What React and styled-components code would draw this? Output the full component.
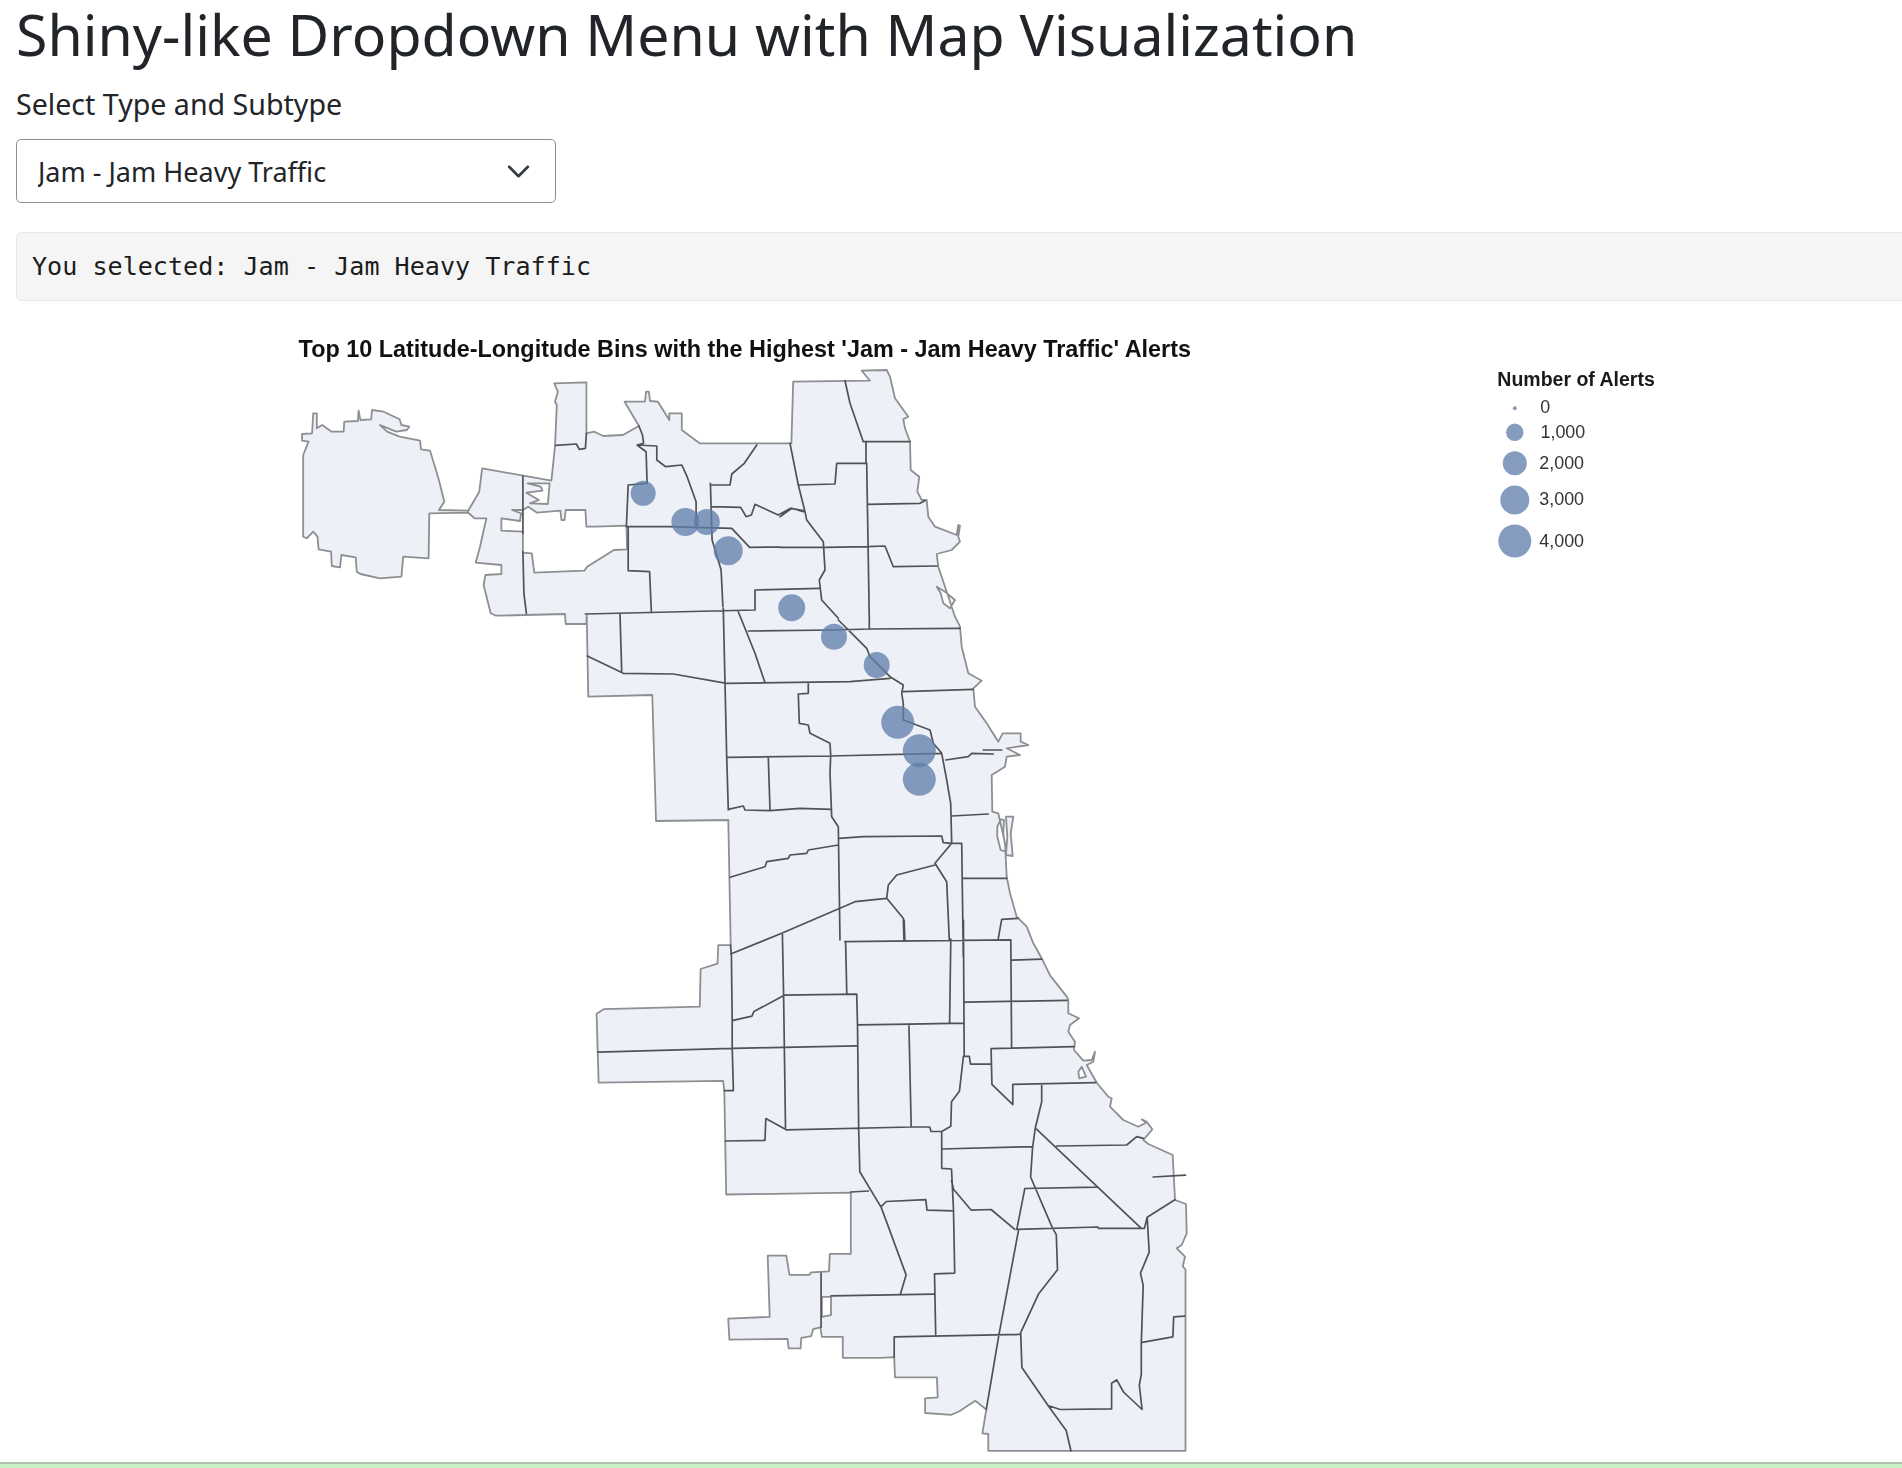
import React from "react";
import styled, { createGlobalStyle } from "styled-components";

const GlobalStyle = createGlobalStyle`
  html, body {
    margin: 0;
    padding: 0;
    background: #fff;
  }
`;

const Page = styled.div`
  width: 1902px;
  height: 1468px;
  overflow: hidden;
  display: flex;
  flex-direction: column;
  font-family: "Noto Sans", "Open Sans", sans-serif;
  color: #212529;
`;

const Content = styled.div`
  flex: 1;
  padding-left: 16px;
  min-height: 0;
`;

const Title = styled.h1`
  margin: 0;
  height: 68px;
  font-size: 57.2px;
  line-height: 68px;
  font-weight: 400;
  white-space: nowrap;
`;

const FieldLabel = styled.label`
  display: block;
  margin-top: 16px;
  height: 40px;
  font-size: 28.6px;
  line-height: 40px;
`;

const SelectWrap = styled.div`
  position: relative;
  width: 540px;
  height: 64px;
  margin-top: 15px;
`;

const Select = styled.select`
  appearance: none;
  display: block;
  width: 100%;
  height: 100%;
  padding: 0 60px 0 21px;
  border: 1px solid #868e96;
  border-radius: 5px;
  background: #fff;
  color: #212529;
  font: 400 27px "Noto Sans", "Open Sans", sans-serif;
`;

const Chevron = styled.svg`
  position: absolute;
  right: 25px;
  top: 20px;
  width: 25px;
  height: 25px;
  fill: none;
  stroke: #343a40;
  stroke-width: 1.7;
  stroke-linecap: round;
  stroke-linejoin: round;
  pointer-events: none;
`;

const Output = styled.pre`
  box-sizing: border-box;
  width: calc(100% + 10px);
  height: 69px;
  margin: 29px 0 0;
  padding: 0 15px;
  border: 1px solid #e6e6e6;
  border-radius: 5px;
  background: #f5f5f5;
  color: #1c1c1c;
  font-family: "DejaVu Sans Mono", monospace;
  font-size: 25.1px;
  line-height: 67px;
`;

const Chart = styled.svg`
  display: block;
  width: 1902px;
  height: 1146px;
  margin: 16px 0 0 -16px;
  filter: blur(0.7px);
`;

const Districts = styled.path`
  fill: #edf0f6;
  fill-rule: evenodd;
  stroke: #8d8f92;
  stroke-width: 1.8;
  stroke-linejoin: round;
`;

const Borders = styled.path`
  fill: none;
  stroke: #505256;
  stroke-width: 1.7;
  stroke-linejoin: round;
  stroke-linecap: round;
`;

const Bin = styled.circle`
  fill: #5f7dab;
  fill-opacity: 0.76;
`;

const ChartTitle = styled.text`
  font: 700 23.4px "Liberation Sans", Arial, sans-serif;
  fill: #111;
`;

const LegendTitle = styled.text`
  font: 700 19.5px "Liberation Sans", Arial, sans-serif;
  fill: #1a1a1a;
`;

const LegendLabel = styled.text`
  font: 400 17.9px "Liberation Sans", Arial, sans-serif;
  fill: #333;
`;

const BottomBand = styled.div`
  flex: none;
  height: 6px;
  box-sizing: border-box;
  border-top: 2px solid #b1bfae;
  background: #c9f1c8;
`;

// the traces were read off crops of differing scale: [left, top, scaleX, scaleY]
const ZONES = {
  a: [280, 320, 2.8, 3],
  b: [580, 560, 3, 3],
  c: [580, 920, 2.53, 2.86],
  d: [780, 360, 3, 3],
  e: [1000, 1000, 3, 3],
};

const line = (zone, text) => {
  const [left, top, sx, sy] = ZONES[zone];
  return text
    .trim()
    .split(/\s+/)
    .map((pair) => {
      const [x, y] = pair.split(",").map(Number);
      return `${(left + x / sx).toFixed(1)} ${(top + y / sy).toFixed(1)}`;
    });
};

const toPath = (...runs) => "M" + runs.flat().join(" L") + " Z";
const toLines = (lines) =>
  lines.map(([zone, text]) => "M" + line(zone, text).join(" L")).join(" ");

const OHARE = toPath(
  line(
    "a",
    `65,405 80,365 62,362 62,342 90,340 93,280 103,280 103,325 118,315 145,335 178,335 180,305
     218,303 220,272 225,300 255,298 258,270 290,275 335,298 340,315 362,320 355,330 325,335 280,315
     300,335 335,350 392,362 395,388 420,392 435,445 445,480 460,545 445,570 527,572 527,578 418,580
     416,715 345,710 340,770 280,775 225,762 215,755 212,712 172,705 168,742 145,738 143,695 108,688
     105,650 93,635 75,655 65,650`
  )
);

const CITY = toPath(
  line(
    "a",
    `527,572 558,515 566,445 760,482 770,378 775,255 770,245 778,215 768,190 858,187 858,340 880,335
     905,348 960,345 1005,318 965,245 1022,245 1025,215 1033,215 1036,243 1058,245 1090,300 1090,280
     1125,280 1125,330 1175,370 1432,370 1437,185`
  ),
  line(
    "d",
    `40,65 270,62 245,32 320,30 330,50 345,115 385,170 370,178 375,205 390,245 392,330 418,350 412,395
     425,420 440,420 445,470 465,500 530,525 535,495 540,497 535,530 540,545 515,570 470,582 475,620
     495,680 525,770`
  ),
  line(
    "b",
    `1140,200 1145,260 1165,340 1205,362 1180,385 1185,440 1220,490 1255,545 1268,520 1322,520 1322,545
     1345,555 1280,565 1320,585 1280,590 1275,620 1235,645 1237,755 1255,760 1275,850 1280,950 1290,1000
     1310,1070 1340,1100 1360,1150 1385,1195`
  ),
  line("c", "1190,160 1232,220"),
  line(
    "e",
    `205,0 205,40 237,55 210,75 205,95 225,125 222,150 250,182 275,180 285,155 280,185 260,195 290,248
     325,290 335,295 330,320 370,360 415,380 438,368 425,358 440,365 457,388 430,420 445,432 518,465
     525,600 558,612 560,700 545,735 530,745 555,770`
  ),
  line(
    "c",
    `1525,990 1532,1000 1532,1518 1033,1518 1033,1470 1018,1468 1028,1400 1000,1375 960,1405 940,1415
     873,1410 873,1368 905,1365 903,1308 797,1308 795,1250 760,1252 665,1252 665,1192 612,1192 608,1165
     590,1170 585,1190 560,1195 558,1225 528,1225 525,1198 378,1200 375,1140 480,1135 475,960 522,960
     530,1015 580,1015 585,1008 630,1005 632,955 685,955 685,780 370,785 365,488 362,460 47,465 42,268
     60,255 303,248 305,140 348,125 350,72`
  ),
  line("b", "452,1155 445,780 228,783 217,405 25,410 20,165"),
  line(
    "a",
    `858,912 800,912 798,882 605,887 590,880 570,795 575,765 620,762 620,735 548,728 560,680 578,595
     545,595 527,578`
  )
);

// white pockets and lagoons inside the city outline
const HOLES = [
  toPath(
    line(
      "a",
      `970,617 885,620 858,620 855,570 800,570 797,600 788,600 785,572 720,578 695,560 680,570 650,570
       675,580 672,603 620,595 620,632 680,635 680,698 705,700 712,758 852,752 860,740 935,690 972,688`
    )
  ),
  toPath(line("a", "693,490 755,490 750,552 700,550 725,540 690,518 735,512 730,500")),
  toPath(line("c", "612,1078 635,1078 635,1130 612,1135")),
  toPath(line("d", "470,680 495,695 525,720 510,745 490,730 482,700")),
  toPath(line("b", "1252,800 1262,778 1272,780 1270,820 1278,875 1262,870 1252,830")),
  toPath(line("b", "1278,770 1300,770 1292,820 1298,888 1278,885 1282,830")),
  toPath(line("e", "245,200 258,230 238,235 235,215")),
].join(" ");

const INNER = [
  ["a", "772,376 830,372 838,388 855,385 858,340"],
  ["a", "680,468 680,640"],
  ["a", "680,695 683,820 690,880"],
  ["a", "1005,318 1015,345 1018,370 1000,375 1025,395 1028,490 975,495 970,618"],
  ["a", "1000,375 1055,378 1055,420 1080,440 1125,435 1140,470 1165,545 1165,620"],
  ["a", "970,620 1090,620 1265,625 1315,682 1400,681"],
  ["a", "975,620 975,752 1035,755 1040,878"],
  ["a", "1205,490 1210,660 1235,750 1240,860"],
  ["a", "1205,495 1260,495 1265,462 1300,430 1335,375"],
  ["a", "1208,560 1290,562 1305,590 1320,585 1330,553 1395,585 1430,565 1465,572"],
  ["a", "855,882 1330,870 1330,810 1510,805"],
  ["d", "195,62 210,130 250,245 390,245"],
  ["d", "258,245 258,310 170,310 165,372 55,375"],
  ["d", "30,250 55,375 75,455 80,480 130,545 135,630 118,660 125,720 175,775"],
  ["d", "0,470 35,445 70,455"],
  ["d", "0,562 135,562 262,560 315,558 340,620 472,618"],
  ["d", "260,310 268,780"],
  ["d", "262,433 420,430 435,422"],
  ["b", "868,170 868,208"],
  ["b", "505,213 760,210 870,207 1140,205"],
  ["b", "775,180 810,215 860,265 870,290 930,350 970,375 965,400 970,430 970,480 1010,495 1050,510 1060,550 1085,580 1100,660 1112,730 1115,850 1065,910 1100,965 1108,1140"],
  ["b", "430,145 435,370 440,590 445,750"],
  ["b", "120,160 125,335"],
  ["b", "22,288 130,340 280,342 440,370 810,365 930,355"],
  ["b", "475,155 525,280 555,368"],
  ["b", "970,395 1180,388"],
  ["b", "685,370 685,400 655,402 658,490 685,495 690,520 750,550 752,585 750,640 755,770 775,800 780,1140"],
  ["b", "440,592 750,588 1085,580"],
  ["b", "565,592 570,750"],
  ["b", "445,748 490,738 495,750 570,752 660,745 755,748"],
  ["b", "450,952 555,920 560,905 625,895 630,885 680,880 685,870 775,855"],
  ["b", "778,835 850,830 1085,828 1090,848 1115,850"],
  ["b", "1115,768 1225,762"],
  ["b", "1115,850 1145,850 1150,1190"],
  ["b", "1065,915 950,945 925,975 920,1015 825,1025 605,1120 452,1182"],
  ["b", "920,1015 970,1075 972,1140"],
  ["b", "1147,955 1280,955"],
  ["b", "1315,1075 1265,1078 1255,1135"],
  ["b", "1097,600 1165,590 1175,580 1240,582"],
  ["b", "1210,570 1265,570"],
  ["c", "670,62 1090,57 1092,365"],
  ["c", "820,0 822,60"],
  ["c", "938,55 935,295"],
  ["c", "970,0 972,390 985,390 988,412 1040,412"],
  ["c", "1092,115 1168,112"],
  ["c", "975,235 1232,230"],
  ["c", "672,62 675,212"],
  ["c", "515,215 700,212 702,300 705,600 708,720 762,822 825,1015 810,1072"],
  ["c", "512,40 515,215 520,595"],
  ["c", "381,72 383,100 385,290 385,365 388,488 365,488"],
  ["c", "385,288 435,275 440,262 512,218"],
  ["c", "45,378 385,367 700,360"],
  ["c", "702,300 835,298 972,295"],
  ["c", "832,298 838,592"],
  ["c", "1040,368 1250,362"],
  ["c", "1040,368 1042,470 1095,528 1095,470 1305,465"],
  ["c", "1168,470 1168,520 1152,595 1145,650 1140,735 1195,880 1205,900 1208,1000 1160,1070 1115,1180 1118,1280 1185,1390 1230,1460 1242,1518"],
  ["c", "1155,598 1420,882"],
  ["e", "170,438 380,435 410,410 430,415"],
  ["c", "915,655 1145,648"],
  ["c", "1125,768 1308,764"],
  ["c", "1125,770 1105,885"],
  ["c", "1105,885 1310,878 1312,882 1425,882"],
  ["c", "1110,885 1060,1185 1028,1400"],
  ["c", "940,745 945,770 990,830 1040,828 1100,885"],
  ["c", "970,390 960,490 940,520 938,590 915,605 888,605 885,592 838,592 522,600 470,568 468,630 368,632"],
  ["c", "915,605 915,710 940,712 945,830 948,1010 897,1012 900,1185"],
  ["c", "762,820 775,805 875,800 878,830 945,832"],
  ["c", "635,1075 895,1070"],
  ["c", "685,778 730,775"],
  ["c", "610,1010 610,1165"],
  ["c", "795,1250 795,1192 1115,1185"],
  ["c", "1428,882 1435,850 1505,800"],
  ["c", "1435,850 1440,950 1418,1010 1425,1045 1420,1210 1420,1300 1415,1330 1422,1400 1375,1350 1358,1315 1345,1325 1345,1398 1215,1400 1188,1390"],
  ["c", "1422,1208 1500,1192 1502,1135 1530,1133"],
  ["c", "1450,735 1532,730"],
];

const BINS = [
  [643.2, 493.3, 12.5],
  [685.4, 522, 14],
  [706.8, 522, 13],
  [728.2, 550.7, 14.5],
  [791.7, 607.7, 13.5],
  [834, 636.7, 13],
  [876.7, 665, 13],
  [897.7, 722.3, 16.5],
  [919.3, 750.7, 16.5],
  [919.3, 779.3, 16.5],
];

const LEGEND = [
  { label: "0", cy: 408.3, r: 2, textX: 1540.3, textY: 413 },
  { label: "1,000", cy: 432.3, r: 8.7, textX: 1540.5, textY: 438 },
  { label: "2,000", cy: 463.3, r: 12, textX: 1539.3, textY: 469 },
  { label: "3,000", cy: 500, r: 14.5, textX: 1539.3, textY: 505 },
  { label: "4,000", cy: 541, r: 16.5, textX: 1539.3, textY: 546.7 },
];

const SELECTED = "Jam - Jam Heavy Traffic";

function App() {
  return (
    <Page>
      <GlobalStyle />
      <Content>
        <Title>Shiny-like Dropdown Menu with Map Visualization</Title>
        <FieldLabel htmlFor="type-select">Select Type and Subtype</FieldLabel>
        <SelectWrap>
          <Select id="type-select" defaultValue={SELECTED}>
            <option>{SELECTED}</option>
          </Select>
          <Chevron viewBox="0 0 16 16">
            <path d="m2 5 6 6 6-6" />
          </Chevron>
        </SelectWrap>
        <Output>You selected: {SELECTED}</Output>
        <Chart viewBox="0 317 1902 1146">
          <ChartTitle x="298.6" y="356.7">
            Top 10 Latitude-Longitude Bins with the Highest '{SELECTED}' Alerts
          </ChartTitle>
          <Districts d={`${OHARE} ${CITY} ${HOLES}`} />
          <Borders d={toLines(INNER)} />
          {BINS.map(([cx, cy, r]) => (
            <Bin key={`${cx}-${cy}`} cx={cx} cy={cy} r={r} />
          ))}
          <LegendTitle x="1497.3" y="386">
            Number of Alerts
          </LegendTitle>
          {LEGEND.map((item) => (
            <g key={item.label}>
              <Bin cx="1514.8" cy={item.cy} r={item.r} />
              <LegendLabel x={item.textX} y={item.textY}>
                {item.label}
              </LegendLabel>
            </g>
          ))}
        </Chart>
      </Content>
      <BottomBand />
    </Page>
  );
}

export default App;
